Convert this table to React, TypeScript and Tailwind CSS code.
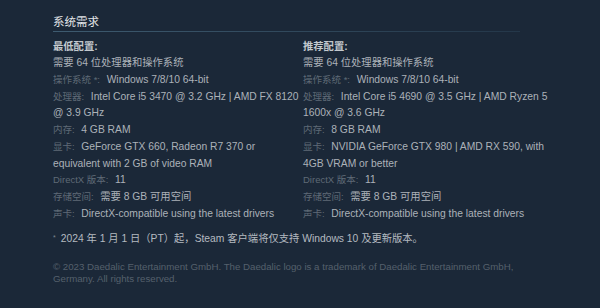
import React from "react";

type Row = { label?: string; value: React.ReactNode };

const font = { fontFamily: '"Liberation Sans", "Noto Sans CJK SC", Arial, sans-serif' };

const left: Row[] = [
  { value: "需要 64 位处理器和操作系统" },
  { label: "操作系统 *:", value: "Windows 7/8/10 64-bit" },
  { label: "处理器:", value: <>Intel Core i5 3470 @ 3.2 GHz | AMD FX 8120<br />@ 3.9 GHz</> },
  { label: "内存:", value: "4 GB RAM" },
  { label: "显卡:", value: <>GeForce GTX 660, Radeon R7 370 or<br />equivalent with 2 GB of video RAM</> },
  { label: "DirectX 版本:", value: "11" },
  { label: "存储空间:", value: "需要 8 GB 可用空间" },
  { label: "声卡:", value: "DirectX-compatible using the latest drivers" },
];

const right: Row[] = [
  { value: "需要 64 位处理器和操作系统" },
  { label: "操作系统 *:", value: "Windows 7/8/10 64-bit" },
  { label: "处理器:", value: <>Intel Core i5 4690 @ 3.5 GHz | AMD Ryzen 5<br />1600x @ 3.6 GHz</> },
  { label: "内存:", value: "8 GB RAM" },
  { label: "显卡:", value: <>NVIDIA GeForce GTX 980 | AMD RX 590, with<br />4GB VRAM or better</> },
  { label: "DirectX 版本:", value: "11" },
  { label: "存储空间:", value: "需要 8 GB 可用空间" },
  { label: "声卡:", value: "DirectX-compatible using the latest drivers" },
];

function Col({ title, rows }: { title: string; rows: Row[] }) {
  return (
    <div className="w-[250px] shrink-0">
      <div className="font-bold text-[#c3c9ce]">{title}</div>
      {rows.map((r, i) => (
        <div key={i} className="whitespace-nowrap text-[#acb2b8]">
          {r.label && <span className="mr-[4px] text-[9.5px] text-[#5f6a76]">{r.label} </span>}
          {r.value}
        </div>
      ))}
    </div>
  );
}

export default function App() {
  return (
    <div className="w-[600px] h-[308px] overflow-hidden bg-[#1b2838] pl-[53px]" style={font}>
      <div className="pt-[14px] text-[11.5px] leading-[16px] text-[#e3e6e9]">系统需求</div>
      <div className="mt-[1px] h-px w-[467px] bg-linear-to-r from-[#3e5b70] to-[#243749]" />
      <div className="mt-[6.6px] flex text-[10.3px] leading-[16.7px]">
        <Col title="最低配置:" rows={left} />
        <Col title="推荐配置:" rows={right} />
      </div>
      <div className="mt-[8.3px] text-[10.3px] leading-[16.7px] text-[#b4bac0] flex items-start">
        <span className="text-[7px] leading-[12px] text-[#7d8791] mr-[5px] mt-[1px]">*</span>
        <span>2024 年 1 月 1 日（PT）起，Steam 客户端将仅支持 Windows 10 及更新版本。</span>
      </div>
      <div className="mt-[13.7px] text-[9.7px] leading-[12px] text-[#55606c]">
        © 2023 Daedalic Entertainment GmbH. The Daedalic logo is a trademark of Daedalic Entertainment GmbH,
        <br />
        Germany. All rights reserved.
      </div>
    </div>
  );
}
